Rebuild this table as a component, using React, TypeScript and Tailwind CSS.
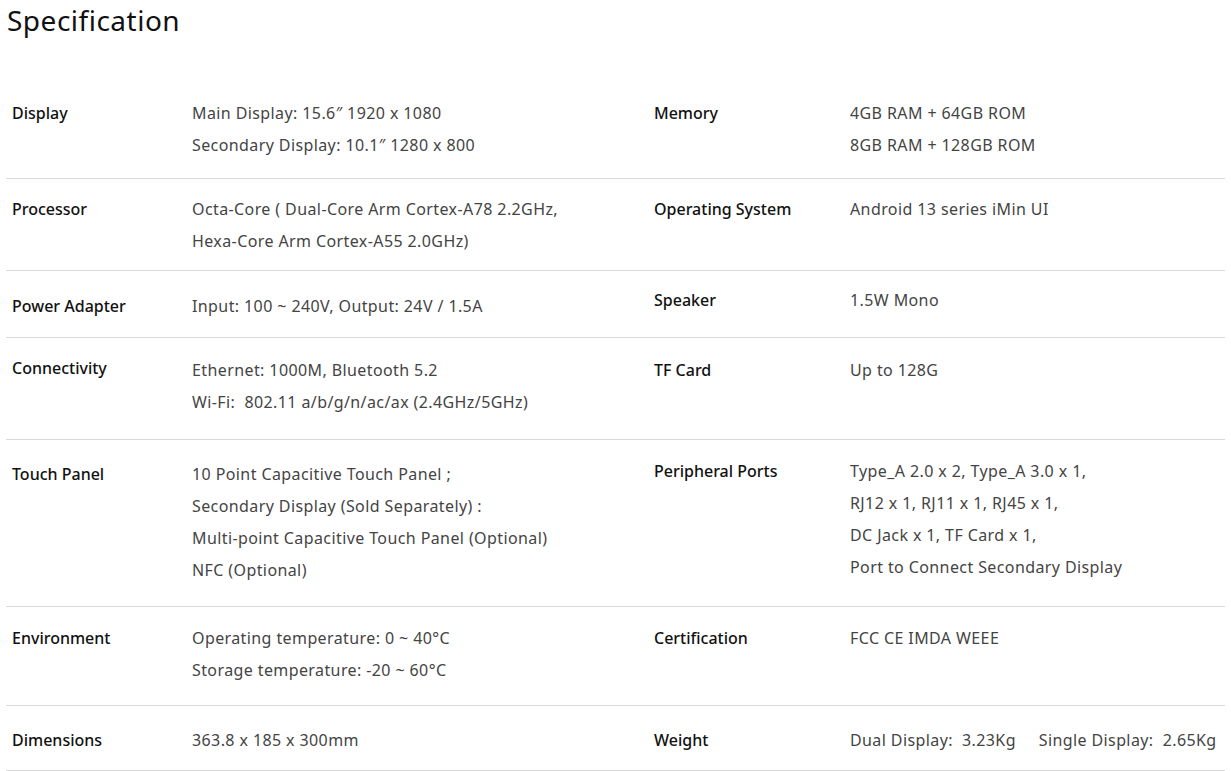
import React from "react";

type Row = {
  h: string;
  lpt: string;
  lvpt?: string;
  rpt: string;
  l: string;
  lv: string[];
  r: string;
  rv: string[];
};

const rows: Row[] = [
  { h: "h-[98px]", lpt: "pt-[16px]", rpt: "pt-[16px]", l: "Display", lv: ["Main Display: 15.6″ 1920 x 1080", "Secondary Display: 10.1″ 1280 x 800"], r: "Memory", rv: ["4GB RAM + 64GB ROM", "8GB RAM + 128GB ROM"] },
  { h: "h-[92px]", lpt: "pt-[14px]", rpt: "pt-[14px]", l: "Processor", lv: ["Octa-Core ( Dual-Core Arm Cortex-A78 2.2GHz,", "Hexa-Core Arm Cortex-A55 2.0GHz)"], r: "Operating System", rv: ["Android 13 series iMin UI"] },
  { h: "h-[67px]", lpt: "pt-[19px]", rpt: "pt-[13px]", l: "Power Adapter", lv: ["Input: 100 ~ 240V, Output: 24V / 1.5A"], r: "Speaker", rv: ["1.5W Mono"] },
  { h: "h-[102px]", lpt: "pt-[14px]", lvpt: "pt-[16px]", rpt: "pt-[16px]", l: "Connectivity", lv: ["Ethernet: 1000M, Bluetooth 5.2", "Wi-Fi:  802.11 a/b/g/n/ac/ax (2.4GHz/5GHz)"], r: "TF Card", rv: ["Up to 128G"] },
  { h: "h-[167px]", lpt: "pt-[18px]", rpt: "pt-[15px]", l: "Touch Panel", lv: ["10 Point Capacitive Touch Panel ;", "Secondary Display (Sold Separately) :", "Multi-point Capacitive Touch Panel (Optional)", "NFC (Optional)"], r: "Peripheral Ports", rv: ["Type_A 2.0 x 2, Type_A 3.0 x 1,", "RJ12 x 1, RJ11 x 1, RJ45 x 1,", "DC Jack x 1, TF Card x 1,", "Port to Connect Secondary Display"] },
  { h: "h-[99px]", lpt: "pt-[15px]", rpt: "pt-[15px]", l: "Environment", lv: ["Operating temperature: 0 ~ 40°C", "Storage temperature: -20 ~ 60°C"], r: "Certification", rv: ["FCC CE IMDA WEEE"] },
  { h: "h-[65px]", lpt: "pt-[18px]", rpt: "pt-[18px]", l: "Dimensions", lv: ["363.8 x 185 x 300mm"], r: "Weight", rv: ["Dual Display:  3.23Kg     Single Display:  2.65Kg"] },
];

export default function App() {
  return (
    <div className="w-[1231px] h-[771px] overflow-hidden bg-white font-['Noto_Sans','Liberation_Sans',sans-serif]">
      <div className="h-[81px] pl-[7px]">
        <h1 className="text-[28px] leading-[40px] tracking-[0.5px] text-[#111] font-normal">Specification</h1>
      </div>
      <div className="ml-[6px] w-[1219px]">
        {rows.map((row, i) => (
          <div key={i} className={`grid grid-cols-[180px_462px_196px_1fr] pl-[6px] border-b border-[#d9d9d9] box-border ${row.h}`}>
            <div className={`${row.lpt} text-[16px] leading-[32px] font-medium text-[#111]`}>{row.l}</div>
            <div className={`${row.lvpt ?? row.lpt} text-[16px] leading-[32px] tracking-[0.4px] text-[#444] whitespace-pre`}>
              {row.lv.map((t, j) => <div key={j}>{t}</div>)}
            </div>
            <div className={`${row.rpt} text-[16px] leading-[32px] font-medium text-[#111]`}>{row.r}</div>
            <div className={`${row.rpt} text-[16px] leading-[32px] tracking-[0.4px] text-[#444] whitespace-pre`}>
              {row.rv.map((t, j) => <div key={j}>{t}</div>)}
            </div>
          </div>
        ))}
      </div>
    </div>
  );
}
